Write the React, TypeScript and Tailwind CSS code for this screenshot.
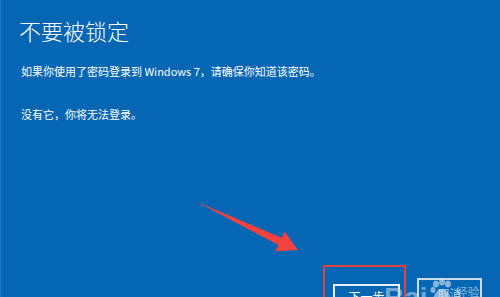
export default function App() {
  return (
    <div
      className="relative h-[297px] w-[500px] overflow-hidden bg-[#0566b4] text-white"
      style={{ fontFamily: '"Noto Sans CJK SC", "Noto Sans", sans-serif' }}
    >
      <div className="flex h-full flex-col border-l border-[#1a78c4] pl-[18px] pt-[15px]">
        <h1 className="text-[22px] font-light leading-[30px]">不要被锁定</h1>
        <p className="mt-[18px] pl-[2px] text-[11px] leading-[16px]">
          如果你使用了密码登录到 Windows 7，请确保你知道该密码。
        </p>
        <p className="mt-[27px] pl-[2px] text-[11px] leading-[16px]">没有它，你将无法登录。</p>

        <div className="mt-auto flex h-[19px] items-start justify-end gap-[17px] pr-[18px]">
          <button className="mt-[6px] flex h-[34px] w-[67px] shrink-0 justify-center border-2 border-[#e8f0f8] pt-[3px] text-[12px] leading-[16px] text-white">
            下一步
          </button>
          <button className="flex h-[34px] w-[65px] shrink-0 justify-center border-2 border-[#c9ddef] pt-[6px] text-[12px] leading-[16px] text-white/70">
            取消
          </button>
        </div>
      </div>

      {/* red annotation box */}
      <div className="pointer-events-none absolute left-[323px] top-[265px] h-[50px] w-[83px] border-2 border-[#e0413f]" />

      {/* watermark */}
      <div className="pointer-events-none absolute left-[384px] top-[278px] flex items-start gap-[1px] opacity-60">
        <span className="mt-[6px] text-[28px] font-bold leading-[28px] text-[#b8d2ee]" style={{ fontFamily: '"Liberation Sans", sans-serif' }}>
          Bai
        </span>
        <svg width="26" height="26" viewBox="0 0 26 26">
          <g fill="#dce8f5">
            <ellipse cx="7" cy="6" rx="3" ry="3.5" />
            <ellipse cx="13" cy="4" rx="3" ry="3.5" />
            <ellipse cx="19" cy="6" rx="3" ry="3.5" />
            <ellipse cx="4" cy="12" rx="2.5" ry="3" />
            <path d="M13 11c-5 0-9 7-9 11 0 3 4 4 9 4s9-1 9-4c0-4-4-11-9-11z" />
          </g>
        </svg>
        <span className="mt-[6px] text-[12px] leading-[16px] text-[#dce8f5]">经验</span>
      </div>

      {/* arrow */}
      <svg className="pointer-events-none absolute left-0 top-0" width="500" height="297">
        <polygon
          points="197,202 281.7,237.8 284.7,231.5 298,250 275.3,251.3 278.3,245"
          fill="#f4423f"
        />
      </svg>
    </div>
  );
}
